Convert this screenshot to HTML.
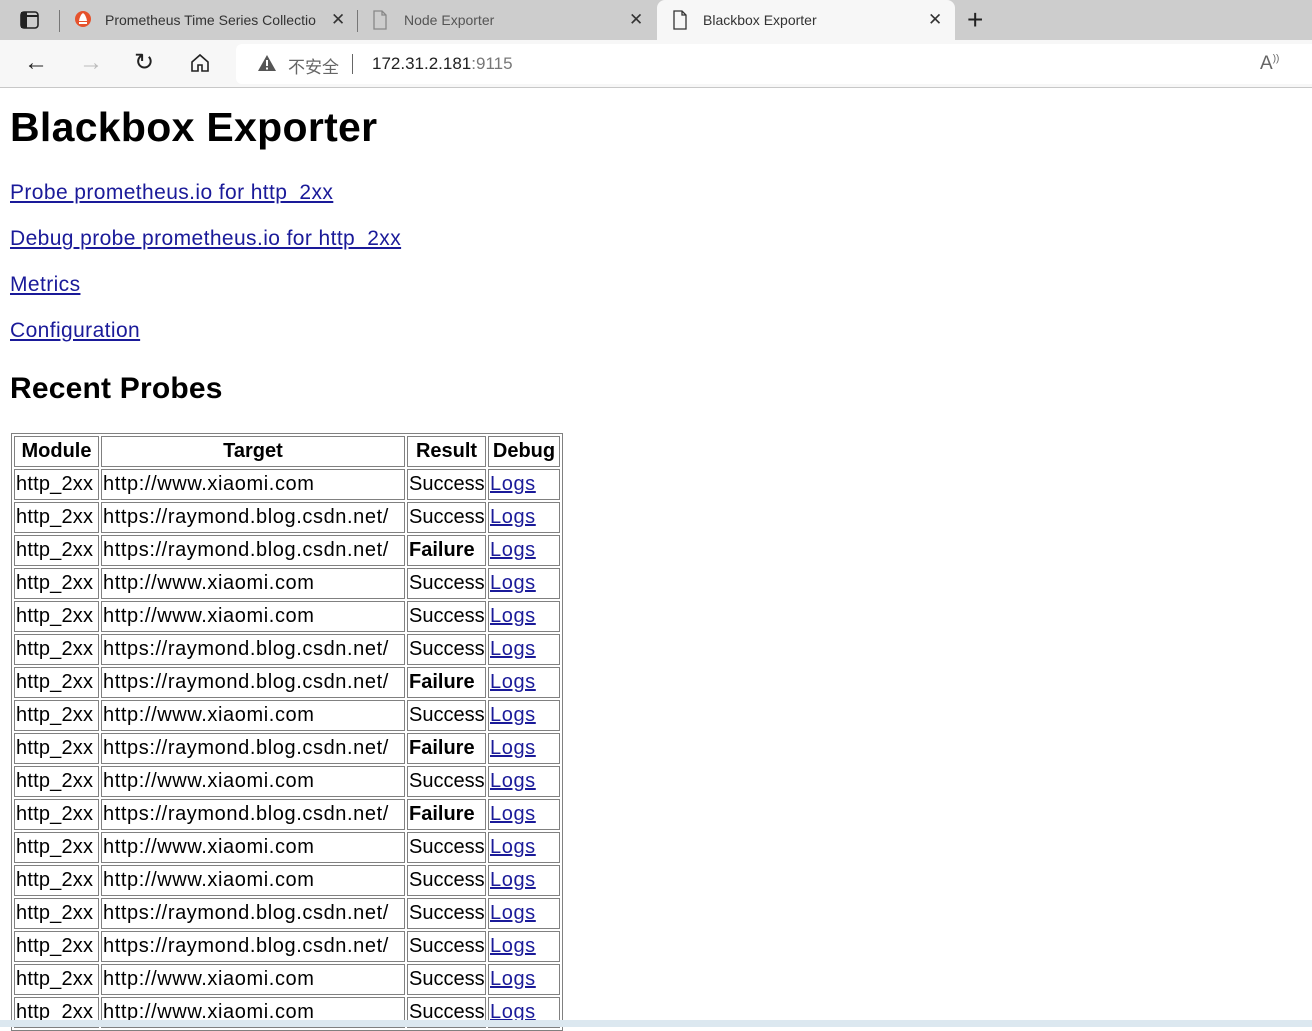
<!DOCTYPE html>
<html><head><meta charset="utf-8"><style>
*{margin:0;padding:0;box-sizing:border-box}
body{width:1312px;height:1027px;overflow:hidden;background:#fff;font-family:"Liberation Sans","Noto Sans CJK SC",sans-serif;position:relative}
.tabs{position:absolute;left:0;top:0;width:1312px;height:40px;background:#cdcdcd}
.tab{position:absolute;top:0;height:40px;font-size:14px;color:#333;line-height:40px}
.bar{position:absolute;left:0;top:40px;width:1312px;height:48px;background:#f7f7f7;border-bottom:1px solid #c8c8c8}
.addr{position:absolute;left:236px;top:4px;width:1076px;height:40px;background:#fff;border-radius:6px 0 0 6px}
.abs{position:absolute}
.lk{position:absolute;left:10px;font-size:21px;letter-spacing:0.4px;color:#1a1a99;text-decoration:underline;white-space:nowrap}
table{position:absolute;left:11px;top:433px;width:552px;border:1px solid #808080;border-spacing:2px;table-layout:fixed;font-size:20px}
td,th{border:1px solid #808080;height:31px;padding:0 1px;white-space:nowrap;overflow:hidden;text-align:left;line-height:29px;letter-spacing:0.6px}
td:nth-child(1){letter-spacing:0.2px}
td:nth-child(3){letter-spacing:0}
th{text-align:center;letter-spacing:0}
td a{color:#1a1a99}
.bot{position:absolute;left:0;top:1020px;width:1312px;height:7px;background:#dce8f0}
</style></head><body>
<div class="tabs">
 <svg class="abs" style="left:20px;top:11px" width="20" height="18"><rect x="1" y="1" width="17" height="16" rx="3" fill="none" stroke="#222" stroke-width="1.6"/><rect x="1" y="1" width="6" height="16" fill="#222"/><line x1="1" y1="5" x2="18" y2="5" stroke="#222" stroke-width="2"/></svg>
 <div class="abs" style="left:59px;top:10px;width:1px;height:22px;background:#777"></div>
 <svg class="abs" style="left:74px;top:10px" width="18" height="18"><circle cx="9" cy="9" r="8" fill="#e6522c"/><path d="M5 11 Q6 5 9 3 Q12 5 13 11Z" fill="#fff"/><rect x="5" y="12" width="8" height="2" fill="#fff"/></svg>
 <div class="tab" style="left:105px;width:215px;overflow:hidden;white-space:nowrap">Prometheus Time Series Collectio</div>
 <div class="tab" style="left:331px;font-size:17px">✕</div>
 <div class="abs" style="left:357px;top:10px;width:1px;height:22px;background:#777"></div>
 <svg class="abs" style="left:372px;top:10px" width="16" height="20"><path d="M2 1H10L14 5V19H2Z M10 1V5H14" fill="none" stroke="#888" stroke-width="1.3"/></svg>
 <div class="tab" style="left:404px;color:#555">Node Exporter</div>
 <div class="tab" style="left:629px;font-size:17px">✕</div>
 <div class="abs" style="left:657px;top:0;width:298px;height:40px;background:#f7f7f7;border-radius:8px 8px 0 0"></div>
 <svg class="abs" style="left:672px;top:10px" width="16" height="20"><path d="M2 1H10L14 5V19H2Z M10 1V5H14" fill="none" stroke="#333" stroke-width="1.3"/></svg>
 <div class="tab" style="left:703px">Blackbox Exporter</div>
 <div class="tab" style="left:928px;font-size:17px">✕</div>
 <div class="tab" style="left:967px;font-size:28px;font-weight:300;color:#222">+</div>
</div>
<div class="bar">
 <div class="abs" style="left:24px;top:9px;font-size:24px;color:#222">←</div>
 <div class="abs" style="left:79px;top:9px;font-size:24px;color:#bbb">→</div>
 <div class="abs" style="left:134px;top:8px;font-size:24px;color:#222">↻</div>
 <svg class="abs" style="left:190px;top:13px" width="20" height="20"><path d="M2 9L10 2L18 9V18H12V12H8V18H2Z" fill="none" stroke="#222" stroke-width="1.6"/></svg>
 <div class="addr">
  <svg class="abs" style="left:21px;top:10px" width="20" height="18"><path d="M10 1L19 17H1Z" fill="#555"/><rect x="9" y="6" width="2" height="6" fill="#fff"/><rect x="9" y="13.5" width="2" height="2" fill="#fff"/></svg>
  <div class="abs" style="left:52px;top:9px;font-size:17px;color:#666">不安全</div>
  <div class="abs" style="left:116px;top:10px;width:1px;height:20px;background:#666"></div>
  <div class="abs" style="left:136px;top:10px;font-size:17px;color:#222">172.31.2.181<span style="color:#777">:9115</span></div>
  <div class="abs" style="left:1024px;top:9px;font-size:19px;color:#666">A<sup style="font-size:10px">))</sup></div>
 </div>
</div>
<div class="abs" style="left:10px;top:104px;font-size:41px;letter-spacing:0.3px;font-weight:bold;white-space:nowrap">Blackbox Exporter</div>
<div class="lk" style="top:181px">Probe prometheus.io for http_2xx</div>
<div class="lk" style="top:227px">Debug probe prometheus.io for http_2xx</div>
<div class="lk" style="top:273px">Metrics</div>
<div class="lk" style="top:319px">Configuration</div>
<div class="abs" style="left:10px;top:372px;font-size:30px;letter-spacing:0.2px;font-weight:bold;white-space:nowrap">Recent Probes</div>
<table>
<colgroup><col style="width:85px"><col style="width:304px"><col style="width:79px"><col style="width:72px"></colgroup>
<tr><th>Module</th><th>Target</th><th>Result</th><th>Debug</th></tr>
<tr><td>http_2xx</td><td>http://www.xiaomi.com</td><td>Success</td><td><a href="#">Logs</a></td></tr>
<tr><td>http_2xx</td><td>https://raymond.blog.csdn.net/</td><td>Success</td><td><a href="#">Logs</a></td></tr>
<tr><td>http_2xx</td><td>https://raymond.blog.csdn.net/</td><td><b>Failure</b></td><td><a href="#">Logs</a></td></tr>
<tr><td>http_2xx</td><td>http://www.xiaomi.com</td><td>Success</td><td><a href="#">Logs</a></td></tr>
<tr><td>http_2xx</td><td>http://www.xiaomi.com</td><td>Success</td><td><a href="#">Logs</a></td></tr>
<tr><td>http_2xx</td><td>https://raymond.blog.csdn.net/</td><td>Success</td><td><a href="#">Logs</a></td></tr>
<tr><td>http_2xx</td><td>https://raymond.blog.csdn.net/</td><td><b>Failure</b></td><td><a href="#">Logs</a></td></tr>
<tr><td>http_2xx</td><td>http://www.xiaomi.com</td><td>Success</td><td><a href="#">Logs</a></td></tr>
<tr><td>http_2xx</td><td>https://raymond.blog.csdn.net/</td><td><b>Failure</b></td><td><a href="#">Logs</a></td></tr>
<tr><td>http_2xx</td><td>http://www.xiaomi.com</td><td>Success</td><td><a href="#">Logs</a></td></tr>
<tr><td>http_2xx</td><td>https://raymond.blog.csdn.net/</td><td><b>Failure</b></td><td><a href="#">Logs</a></td></tr>
<tr><td>http_2xx</td><td>http://www.xiaomi.com</td><td>Success</td><td><a href="#">Logs</a></td></tr>
<tr><td>http_2xx</td><td>http://www.xiaomi.com</td><td>Success</td><td><a href="#">Logs</a></td></tr>
<tr><td>http_2xx</td><td>https://raymond.blog.csdn.net/</td><td>Success</td><td><a href="#">Logs</a></td></tr>
<tr><td>http_2xx</td><td>https://raymond.blog.csdn.net/</td><td>Success</td><td><a href="#">Logs</a></td></tr>
<tr><td>http_2xx</td><td>http://www.xiaomi.com</td><td>Success</td><td><a href="#">Logs</a></td></tr>
<tr><td>http_2xx</td><td>http://www.xiaomi.com</td><td>Success</td><td><a href="#">Logs</a></td></tr>
</table>
<div class="bot"></div>
</body></html>
